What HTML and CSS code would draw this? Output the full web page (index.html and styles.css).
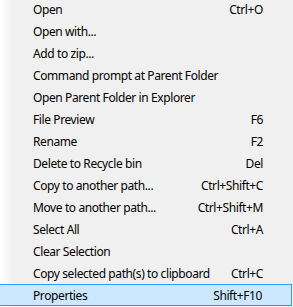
FILE: index.html
```html
<!DOCTYPE html>
<html>
	<head>
		<meta charset="utf-8">
		<title>Context menu</title>
		<link rel="stylesheet" href="styles.css">
	</head>
	<body>
	<div class="menu">
		<div class="row"><span class="label">Open</span><span class="key">Ctrl+O</span></div>
		<div class="row"><span class="label">Open with...</span><span class="key"></span></div>
		<div class="row"><span class="label">Add to zip...</span><span class="key"></span></div>
		<div class="row"><span class="label">Command prompt at Parent Folder</span><span class="key"></span></div>
		<div class="row"><span class="label">Open Parent Folder in Explorer</span><span class="key"></span></div>
		<div class="row"><span class="label">File Preview</span><span class="key">F6</span></div>
		<div class="row"><span class="label">Rename</span><span class="key">F2</span></div>
		<div class="row"><span class="label">Delete to Recycle bin</span><span class="key">Del</span></div>
		<div class="row"><span class="label">Copy to another path...</span><span class="key">Ctrl+Shift+C</span></div>
		<div class="row"><span class="label">Move to another path...</span><span class="key">Ctrl+Shift+M</span></div>
		<div class="row"><span class="label">Select All</span><span class="key">Ctrl+A</span></div>
		<div class="row"><span class="label">Clear Selection</span><span class="key"></span></div>
		<div class="row"><span class="label">Copy selected path(s) to clipboard</span><span class="key">Ctrl+C</span></div>
		<div class="row active"><span class="label">Properties</span><span class="key">Shift+F10</span></div>
	</div>
	</body>
</html>
```

FILE: styles.css
```css
body{
	margin:0px;
	background-color:#f0f0f0;
}
.menu{
	width:293px;
	height:307px;
	overflow:hidden;
	background:linear-gradient(to right,#ffffff 0px,#f0f0f0 14px);
	font-family:"Noto Sans",sans-serif;
	font-size:12px;
	letter-spacing:-0.4px;
	color:#000;
	padding-top:0px;
	box-sizing:border-box;
}
.row{
	display:flex;
	height:22px;
	align-items:center;
	padding-left:33px;
	padding-right:30px;
	box-sizing:border-box;
}
.row:first-child{margin-top:-2px;}
.label{flex:auto;white-space:nowrap;}
.key{flex:none;white-space:nowrap;}
.active{
	background-color:#cce8ff;
	border:1px solid #3399ff;
	border-left:none;
	width:292px;
	padding-right:29px;
}
```
